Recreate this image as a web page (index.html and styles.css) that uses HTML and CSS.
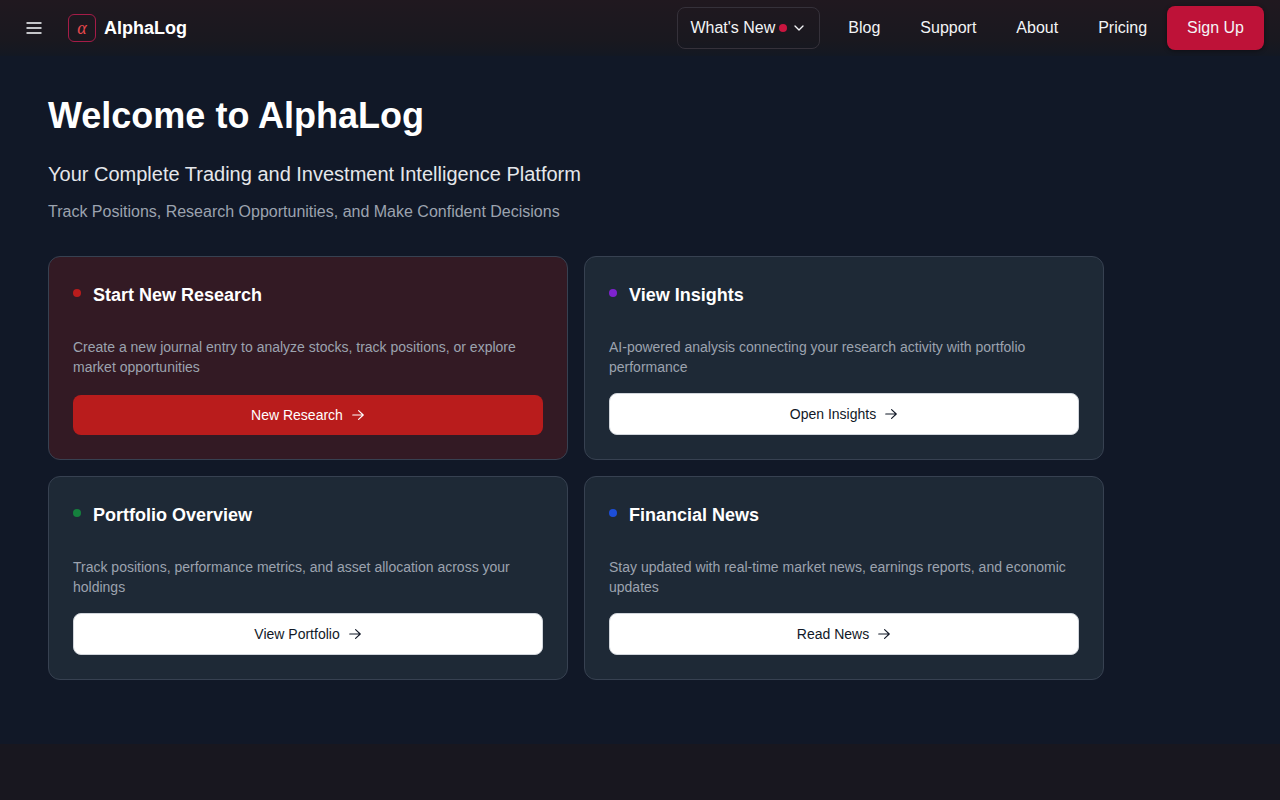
FILE: index.html
```html
<!DOCTYPE html>
<html lang="en">
<head>
  <meta charset="UTF-8">
  <meta name="viewport" content="width=device-width, initial-scale=1.0">
  <title>AlphaLog</title>
  <link rel="stylesheet" href="styles.css">
</head>
<body>

  <header class="topbar">
    <button class="menu-btn" type="button" aria-label="Open menu">
      <svg width="20" height="20" viewBox="0 0 20 20" fill="none" stroke="currentColor" stroke-width="2">
        <path d="M2.5 5h15M2.5 10h15M2.5 15h15"/>
      </svg>
    </button>
    <a class="brand" href="#">
      <span class="brand-mark">α</span>
      <span class="brand-name">AlphaLog</span>
    </a>

    <nav class="nav">
      <button class="whats-new" type="button">
        What's New
        <span class="new-dot"></span>
        <svg width="16" height="16" viewBox="0 0 24 24" fill="none" stroke="currentColor" stroke-width="2" stroke-linecap="round" stroke-linejoin="round">
          <path d="m6 9 6 6 6-6"/>
        </svg>
      </button>
      <a class="nav-link" href="#">Blog</a>
      <a class="nav-link" href="#">Support</a>
      <a class="nav-link" href="#">About</a>
      <a class="nav-link" href="#">Pricing</a>
      <a class="sign-up" href="#">Sign Up</a>
    </nav>
  </header>

  <main class="main">
    <div class="content">
      <h1>Welcome to AlphaLog</h1>
      <p class="subtitle">Your Complete Trading and Investment Intelligence Platform</p>
      <p class="tagline">Track Positions, Research Opportunities, and Make Confident Decisions</p>

      <div class="cards">
        <section class="card card-primary">
          <h2><span class="dot dot-red"></span>Start New Research</h2>
          <p>Create a new journal entry to analyze stocks, track positions, or explore market opportunities</p>
          <button class="btn btn-red" type="button">
            New Research
            <svg class="arrow" viewBox="0 0 24 24"><path d="M3 12h18M13 4.5l8 7.5-8 7.5"/></svg>
          </button>
        </section>

        <section class="card">
          <h2><span class="dot dot-purple"></span>View Insights</h2>
          <p>AI-powered analysis connecting your research activity with portfolio performance</p>
          <button class="btn" type="button">
            Open Insights
            <svg class="arrow" viewBox="0 0 24 24"><path d="M3 12h18M13 4.5l8 7.5-8 7.5"/></svg>
          </button>
        </section>

        <section class="card">
          <h2><span class="dot dot-green"></span>Portfolio Overview</h2>
          <p>Track positions, performance metrics, and asset allocation across your holdings</p>
          <button class="btn" type="button">
            View Portfolio
            <svg class="arrow" viewBox="0 0 24 24"><path d="M3 12h18M13 4.5l8 7.5-8 7.5"/></svg>
          </button>
        </section>

        <section class="card">
          <h2><span class="dot dot-blue"></span>Financial News</h2>
          <p>Stay updated with real-time market news, earnings reports, and economic updates</p>
          <button class="btn" type="button">
            Read News
            <svg class="arrow" viewBox="0 0 24 24"><path d="M3 12h18M13 4.5l8 7.5-8 7.5"/></svg>
          </button>
        </section>
      </div>
    </div>
  </main>

</body>
</html>
```

FILE: styles.css
```css
* {
  box-sizing: border-box;
}

body {
  margin: 0;
  background-color: #18171f;
  color: #fff;
  font-family: "Liberation Sans", Arial, sans-serif;
  font-size: 16px;
  line-height: 24px;
}

h1, h2, p {
  margin: 0;
}

a {
  color: inherit;
  text-decoration: none;
}

button {
  font: inherit;
  cursor: pointer;
}

/* Top bar */
.topbar {
  display: flex;
  align-items: center;
  height: 56px;
  padding: 0 16px;
  background: linear-gradient(#20181f, #19181f 75%, #131823);
}

.menu-btn {
  display: flex;
  padding: 8px;
  border: 0;
  background: none;
  color: #c4c5c9;
}

.brand {
  display: flex;
  align-items: center;
  gap: 8px;
  margin-left: 16px;
}

.brand-mark {
  width: 28px;
  height: 28px;
  border: 1px solid #a51c48;
  border-radius: 6px;
  color: #e5484d;
  font-family: "Liberation Serif", serif;
  font-size: 18px;
  font-style: italic;
  line-height: 26px;
  text-align: center;
}

.brand-name {
  font-size: 18px;
  font-weight: bold;
}

.nav {
  display: flex;
  align-items: center;
  margin-left: auto;
  color: #f3f4f6;
}

.whats-new {
  display: flex;
  align-items: center;
  gap: 4px;
  height: 42px;
  margin-right: 8px;
  padding: 0 12px;
  border: 1px solid #35313a;
  border-radius: 8px;
  background: none;
  color: inherit;
}

.new-dot {
  width: 8px;
  height: 8px;
  border-radius: 50%;
  background-color: #c9153f;
}

.nav-link {
  padding: 8px 20px;
}

.sign-up {
  padding: 10px 20px;
  border-radius: 8px;
  background-color: #be1238;
  box-shadow: 0 1px 4px rgba(0, 0, 0, 0.4);
}

/* Dashboard */
.main {
  padding: 40px 48px 64px;
  background-color: #111827;
}

.content {
  max-width: 1056px;
}

h1 {
  margin-bottom: 24px;
  font-size: 36px;
  line-height: 40px;
}

.subtitle {
  margin-bottom: 12px;
  color: #e5e7eb;
  font-size: 20px;
  line-height: 28px;
}

.tagline {
  margin-bottom: 32px;
  color: #9ca3af;
}

.cards {
  display: grid;
  grid-template-columns: 1fr 1fr;
  gap: 16px;
}

.card {
  display: flex;
  flex-direction: column;
  padding: 24px;
  border: 1px solid #374151;
  border-radius: 12px;
  background-color: #1e2936;
}

.card-primary {
  background-color: #331a24;
}

.card h2 {
  display: flex;
  gap: 12px;
  margin-bottom: 28px;
  font-size: 18px;
  line-height: 28px;
}

.card p {
  margin-bottom: 16px;
  color: #9ca3af;
  font-size: 14px;
  line-height: 20px;
}

.dot {
  width: 8px;
  height: 8px;
  margin-top: 8px;
  border-radius: 50%;
}

.dot-red {
  background-color: #b91c1c;
}

.dot-purple {
  background-color: #7e22ce;
}

.dot-green {
  background-color: #15803d;
}

.dot-blue {
  background-color: #1d4ed8;
}

.btn {
  display: flex;
  align-items: center;
  justify-content: center;
  gap: 8px;
  margin-top: auto;
  padding: 10px 16px;
  border: 1px solid #d1d5db;
  border-radius: 8px;
  background-color: #fff;
  color: #111827;
  font-size: 14px;
  line-height: 20px;
}

.btn-red {
  border: 0;
  background-color: #b91c1c;
  color: #fff;
}

.arrow {
  width: 14px;
  height: 14px;
  fill: none;
  stroke: currentColor;
  stroke-width: 2;
  stroke-linecap: round;
  stroke-linejoin: round;
}

@media (max-width: 800px) {
  .cards {
    grid-template-columns: 1fr;
  }
}
```
